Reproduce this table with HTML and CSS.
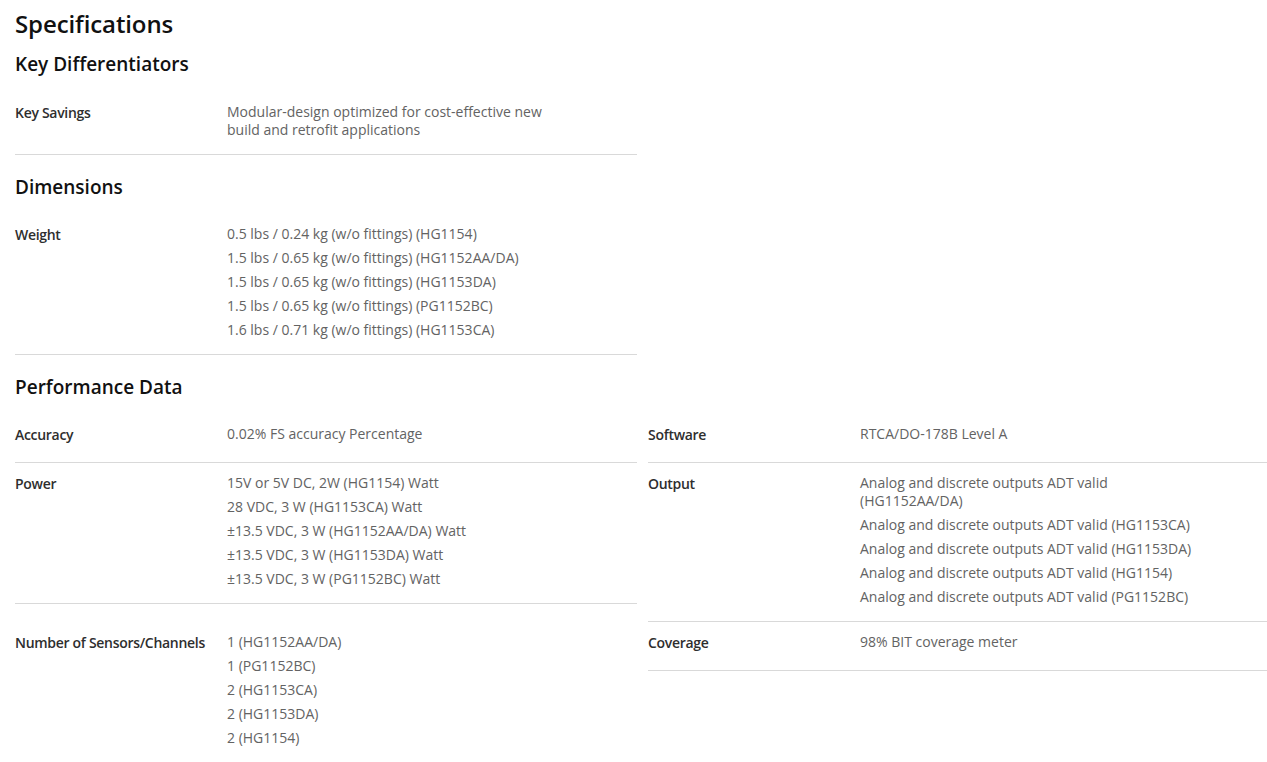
FILE: index.html
```html
<!DOCTYPE html>
<html lang="en">
<head>
<meta charset="utf-8">
<title>Specifications</title>
<link rel="stylesheet" href="styles.css">
</head>
<body>
<main class="specs">
  <h1 class="specs-title">Specifications</h1>

  <section class="group">
    <h2 class="group-title">Key Differentiators</h2>
    <div class="grid">
      <div class="row">
        <div class="label">Key Savings</div>
        <div class="values"><p>Modular-design optimized for cost-effective new build and retrofit applications</p></div>
      </div>
    </div>
  </section>

  <section class="group">
    <h2 class="group-title">Dimensions</h2>
    <div class="grid">
      <div class="row">
        <div class="label">Weight</div>
        <div class="values">
          <p>0.5 lbs / 0.24 kg (w/o fittings) (HG1154)</p>
          <p>1.5 lbs / 0.65 kg (w/o fittings) (HG1152AA/DA)</p>
          <p>1.5 lbs / 0.65 kg (w/o fittings) (HG1153DA)</p>
          <p>1.5 lbs / 0.65 kg (w/o fittings) (PG1152BC)</p>
          <p>1.6 lbs / 0.71 kg (w/o fittings) (HG1153CA)</p>
        </div>
      </div>
    </div>
  </section>

  <section class="group">
    <h2 class="group-title">Performance Data</h2>
    <div class="grid">
      <div class="row">
        <div class="label">Accuracy</div>
        <div class="values"><p>0.02% FS accuracy Percentage</p></div>
      </div>
      <div class="row">
        <div class="label">Software</div>
        <div class="values"><p>RTCA/DO-178B Level A</p></div>
      </div>
      <div class="row">
        <div class="label">Power</div>
        <div class="values">
          <p>15V or 5V DC, 2W (HG1154) Watt</p>
          <p>28 VDC, 3 W (HG1153CA) Watt</p>
          <p>±13.5 VDC, 3 W (HG1152AA/DA) Watt</p>
          <p>±13.5 VDC, 3 W (HG1153DA) Watt</p>
          <p>±13.5 VDC, 3 W (PG1152BC) Watt</p>
        </div>
      </div>
      <div class="row">
        <div class="label">Output</div>
        <div class="values">
          <p>Analog and discrete outputs ADT valid (HG1152AA/DA)</p>
          <p>Analog and discrete outputs ADT valid (HG1153CA)</p>
          <p>Analog and discrete outputs ADT valid (HG1153DA)</p>
          <p>Analog and discrete outputs ADT valid (HG1154)</p>
          <p>Analog and discrete outputs ADT valid (PG1152BC)</p>
        </div>
      </div>
      <div class="row row-open">
        <div class="label">Number of Sensors/Channels</div>
        <div class="values">
          <p>1 (HG1152AA/DA)</p>
          <p>1 (PG1152BC)</p>
          <p>2 (HG1153CA)</p>
          <p>2 (HG1153DA)</p>
          <p>2 (HG1154)</p>
        </div>
      </div>
      <div class="row">
        <div class="label">Coverage</div>
        <div class="values"><p>98% BIT coverage meter</p></div>
      </div>
    </div>
  </section>
</main>
</body>
</html>
```

FILE: styles.css
```css
* { box-sizing: border-box; }

html, body {
  margin: 0;
  padding: 0;
  background: #ffffff;
}

body {
  font-family: "Open Sans", "Liberation Sans", Arial, sans-serif;
  color: #1d1d1d;
  overflow: hidden;
}

.specs {
  padding: 8px 0 0 15px;
  width: 1267px;
}

.specs-title {
  margin: 0;
  font-size: 24px;
  line-height: 32px;
  font-weight: 600;
  color: #111111;
  letter-spacing: -0.1px;
}

.group-title {
  margin: 20px 0 15px;
  font-size: 19px;
  line-height: 24px;
  font-weight: 600;
  color: #111111;
}

.specs-title + .group .group-title {
  margin: 12px 0 16px;
}

.grid {
  display: grid;
  grid-template-columns: 622px 619px;
  column-gap: 11px;
  align-items: start;
}

.row {
  display: flex;
  padding: 10px 0 15px;
  border-bottom: 1px solid #d9d9d9;
}

.row-open {
  border-bottom: none;
}

.label {
  width: 212px;
  flex: none;
  font-size: 14px;
  line-height: 24px;
  margin-top: -1px;
  font-weight: 600;
  color: #2e2e2e;
  letter-spacing: -0.3px;
}

.values {
  width: 340px;
  padding-top: 1px;
  display: flex;
  flex-direction: column;
  gap: 6px;
}

.values p {
  margin: 0;
  font-size: 14px;
  line-height: 18px;
  font-weight: 400;
  color: #636363;
}
```
